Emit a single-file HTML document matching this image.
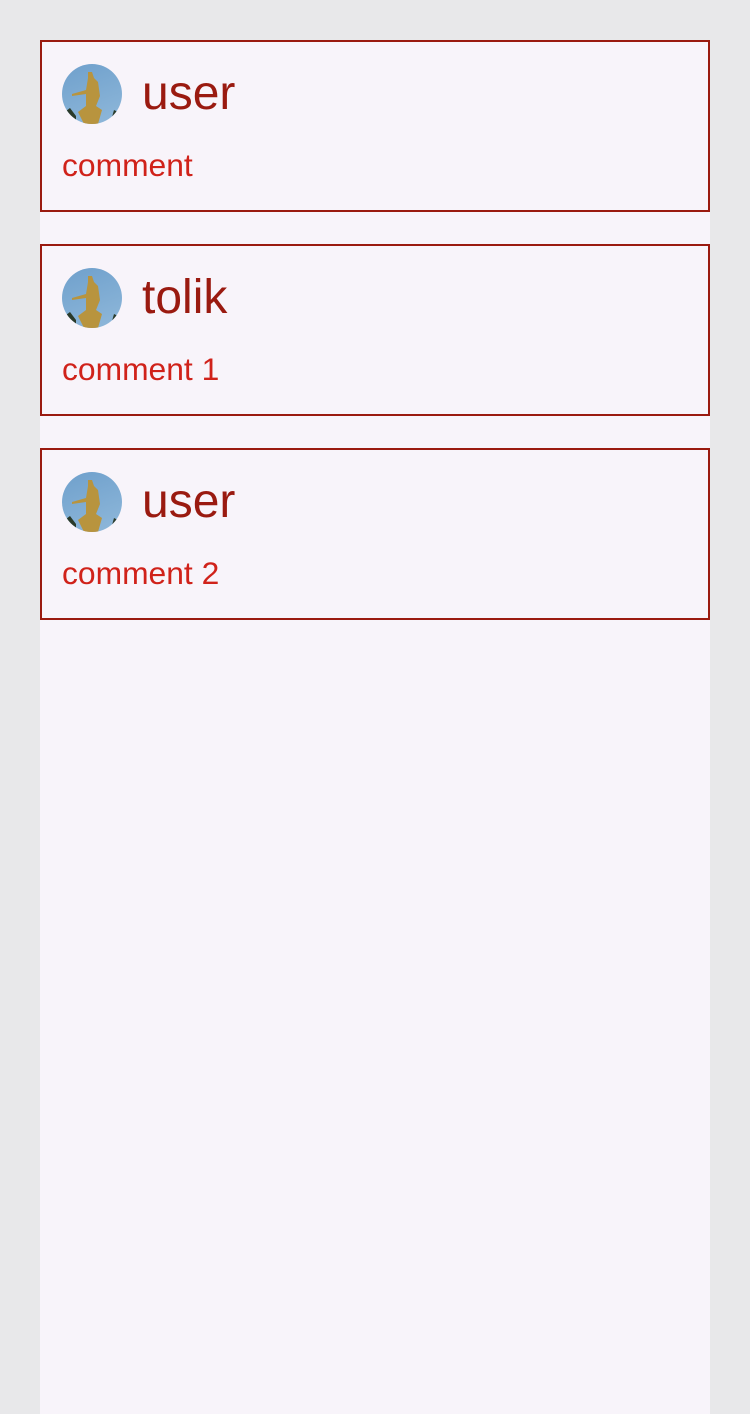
<!DOCTYPE html>
<html><head><style>
html,body{margin:0;padding:0;background:#e8e8ea;width:750px;height:1414px;overflow:hidden;font-family:"Liberation Sans",sans-serif}
.main{position:absolute;left:40px;top:40px;width:670px;height:1374px;background:#f8f4fa}
.card{position:absolute;left:40px;width:666px;height:168px;border:2px solid #9a1a10;background:#f8f4fa}
.av{position:absolute;left:20px;top:22px;width:60px;height:60px;border-radius:50%;overflow:hidden;background:linear-gradient(160deg,#6fa0cc,#8fb8da)}
.name{position:absolute;left:100px;top:24px;font-size:48px;color:#9a1a10;line-height:56px}
.cm{position:absolute;left:20px;top:105px;font-size:31.8px;color:#d0221a;line-height:36px}
</style></head><body>
<div class="main"></div>
<div class="card" style="top:40px"><div class="av"><svg width="60" height="60"><path d="M26 8l4 0 2 6 4 4 2 14-4 10 6 4-4 14H22l-6-12 8-6 0-12-14 2 0-2 14-4 2-12z" fill="#b8943e"/><path d="M0 50l8-6 6 8 0 8H0zM48 60l4-14 8 4v10z" fill="#2a3a2a"/></svg></div><div class="name">user</div><div class="cm">comment</div></div>
<div class="card" style="top:244px"><div class="av"><svg width="60" height="60"><path d="M26 8l4 0 2 6 4 4 2 14-4 10 6 4-4 14H22l-6-12 8-6 0-12-14 2 0-2 14-4 2-12z" fill="#b8943e"/><path d="M0 50l8-6 6 8 0 8H0zM48 60l4-14 8 4v10z" fill="#2a3a2a"/></svg></div><div class="name">tolik</div><div class="cm">comment 1</div></div>
<div class="card" style="top:448px"><div class="av"><svg width="60" height="60"><path d="M26 8l4 0 2 6 4 4 2 14-4 10 6 4-4 14H22l-6-12 8-6 0-12-14 2 0-2 14-4 2-12z" fill="#b8943e"/><path d="M0 50l8-6 6 8 0 8H0zM48 60l4-14 8 4v10z" fill="#2a3a2a"/></svg></div><div class="name">user</div><div class="cm">comment 2</div></div>
</body></html>
